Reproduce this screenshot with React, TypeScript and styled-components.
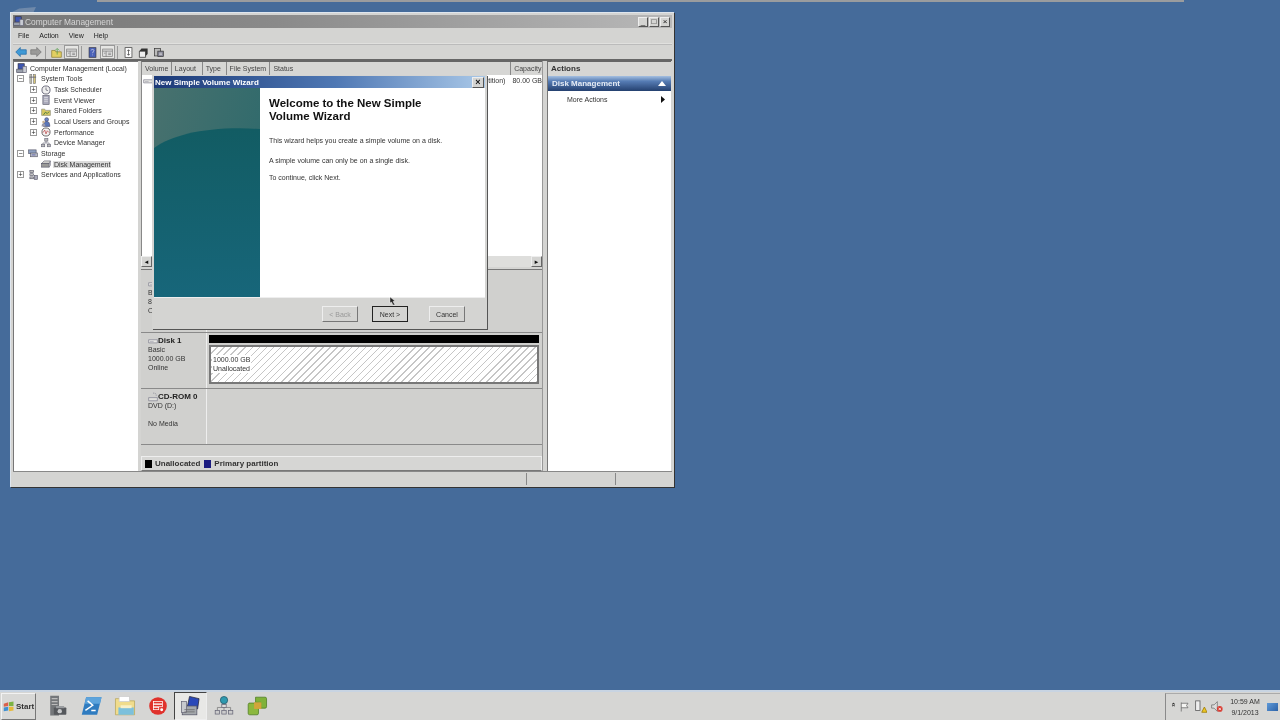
import { type ReactNode } from "react";
import styled, { createGlobalStyle } from "styled-components";

const GlobalStyle = createGlobalStyle`
  html, body {
    margin: 0;
    padding: 0;
    width: 1280px;
    height: 720px;
    overflow: hidden;
    background: #456b9a;
    font-family: "Liberation Sans", Arial, sans-serif;
    font-size: 7px;
    color: #222;
  }
  * { box-sizing: border-box; }
`;

const icons: Record<string, ReactNode> = {
  computer: (
    <>
      <rect x="3" y="1" width="9" height="8" fill="#3d55b0" stroke="#334" />
      <rect x="1" y="9" width="11" height="5" fill="#9aa0ac" stroke="#556" />
      <rect x="10" y="5" width="5" height="9" fill="#c9ccd4" stroke="#667" />
    </>
  ),
  tools: (
    <>
      <rect x="3" y="1" width="3" height="14" fill="#c8c8b8" stroke="#777" />
      <rect x="9" y="1" width="3" height="14" fill="#d8c878" stroke="#777" />
      <path d="M2 5h11" stroke="#667" strokeWidth="1.5" />
    </>
  ),
  clock: (
    <>
      <circle cx="8" cy="8" r="6.5" fill="#eee" stroke="#667" strokeWidth="1.5" />
      <path d="M8 4v4l3 1" stroke="#445" fill="none" />
    </>
  ),
  log: (
    <>
      <rect x="3" y="1" width="10" height="14" fill="#aab" stroke="#556" />
      <path d="M5 4h6M5 7h6M5 10h6" stroke="#eee" />
    </>
  ),
  share: (
    <>
      <path d="M1 5h5l1 2h8v8H1z" fill="#d8c860" stroke="#887" />
      <path d="M4 14l3-4 3 2 3-3" stroke="#4a7a40" fill="none" strokeWidth="1.5" />
    </>
  ),
  users: (
    <>
      <circle cx="9" cy="4" r="3" fill="#6a86c8" stroke="#446" />
      <path d="M4 15c0-6 2-8 5-8s5 2 5 8z" fill="#5a76b8" stroke="#446" />
      <circle cx="4" cy="8" r="2" fill="#c8b090" />
      <path d="M1 15c0-3 1-5 3-5s3 2 3 5z" fill="#99a" />
    </>
  ),
  perf: (
    <>
      <circle cx="8" cy="8" r="6.5" fill="#f4f0f0" stroke="#666" strokeWidth="1.5" />
      <path d="M3 9l3-4 2 6 2-5 3 3" stroke="#b03030" fill="none" />
    </>
  ),
  device: (
    <>
      <rect x="6" y="1" width="5" height="4" fill="#bbb" stroke="#667" />
      <rect x="1" y="10" width="5" height="4" fill="#bbb" stroke="#667" />
      <rect x="10" y="10" width="5" height="4" fill="#bbb" stroke="#667" />
      <path d="M8 5v3M3 10V8h10v2" stroke="#667" fill="none" />
    </>
  ),
  storage: (
    <>
      <rect x="1" y="3" width="12" height="6" fill="#8ea0c0" stroke="#556" />
      <rect x="4" y="8" width="11" height="6" fill="#b8bcc4" stroke="#556" />
      <path d="M6 11h6" stroke="#44a" />
    </>
  ),
  disk: (
    <>
      <path d="M1 7l4-4h10l-2 4z" fill="#d4d4d0" stroke="#667" />
      <rect x="1" y="7" width="12" height="6" fill="#9a9a98" stroke="#556" />
      <path d="M13 13l2-3V3" fill="none" stroke="#667" />
    </>
  ),
  services: (
    <>
      <rect x="3" y="1" width="6" height="3" fill="#bbb" stroke="#556" />
      <rect x="3" y="6" width="6" height="3" fill="#ccc" stroke="#556" />
      <rect x="3" y="11" width="6" height="3" fill="#bbb" stroke="#556" />
      <rect x="10" y="9" width="5" height="6" fill="#aab" stroke="#556" />
    </>
  ),
  back: <path d="M1 8l6-6v3h8v6H7v3z" fill="#3f9ad6" stroke="#2a6ea8" />,
  forward: <path d="M15 8L9 2v3H1v6h8v3z" fill="#9a9a98" stroke="#777" />,
  up: (
    <>
      <path d="M1 5h5l1 2h8v8H1z" fill="#e2cf62" stroke="#8a7a30" />
      <path d="M9 11V3M6 5l3-3 3 3" stroke="#4a9a40" fill="none" />
    </>
  ),
  pane: (
    <>
      <rect x="1" y="3" width="14" height="11" fill="#ddd" stroke="#777" />
      <path d="M1 6h14M6 6v8M3 9h2M9 9h4M9 11h4" stroke="#777" />
    </>
  ),
  help: (
    <>
      <rect x="3" y="1" width="10" height="14" fill="#4a62b8" stroke="#334" />
      <path d="M6 5c0-2 4-2 4 0s-2 2-2 4M8 11v1" stroke="#dde" fill="none" />
    </>
  ),
  exportList: (
    <>
      <rect x="3" y="1" width="10" height="14" fill="#fff" stroke="#333" />
      <path d="M6 6l2-2 2 2M8 4v8M6 10l2 2 2-2" stroke="#333" fill="none" />
    </>
  ),
  props: (
    <>
      <path d="M2 6h9v9H2z" fill="#eee" stroke="#222" />
      <path d="M2 6l3-4h9l-3 4zM11 6l3-4v8l-3 3z" fill="#333" />
    </>
  ),
  snap: (
    <>
      <rect x="2" y="2" width="9" height="11" fill="#bbb" stroke="#333" />
      <rect x="7" y="6" width="8" height="8" fill="#889" stroke="#333" />
      <path d="M9 9h4M9 11h4" stroke="#ddd" />
    </>
  ),
  drive: (
    <>
      <path d="M1 6h14v5H1z" fill="#e8e8e4" stroke="#778" />
      <path d="M3 9h6" stroke="#99a" />
    </>
  ),
  cdrom: (
    <>
      <path d="M1 9h14v5H1z" fill="#e0e0dc" stroke="#778" />
      <path d="M8 2a4 3 0 0 1 5 4" stroke="#778" fill="none" strokeDasharray="2 1" />
    </>
  ),
  orb: (
    <>
      <path d="M1 5l6-2v5l-6 1z" fill="#d9604a" />
      <path d="M8 3l6-1v6l-6 0z" fill="#7cb342" />
      <path d="M1 10l6-1v5l-6 1z" fill="#3f8fd0" />
      <path d="M8 9h6v5l-6 1z" fill="#e6b93a" />
    </>
  ),
  server: (
    <>
      <rect x="3" y="1" width="12" height="27" fill="#74777a" />
      <path d="M5 5h8M5 9h8M5 13h8" stroke="#bbb" strokeWidth="1.5" />
      <rect x="8" y="17" width="17" height="10" rx="1" fill="#55585c" />
      <rect x="11" y="15" width="11" height="3" fill="#9a9da0" />
      <circle cx="16" cy="22" r="3" fill="#c8cacc" />
    </>
  ),
  shell: (
    <>
      <path d="M7 3h21l-6 24H1z" fill="#2f7cc0" />
      <path d="M7 3h21l-2 9H5z" fill="#5da4dc" />
      <path d="M9 8l7 6-10 7M14 21h6" stroke="#fff" strokeWidth="2" fill="none" />
    </>
  ),
  explorer: (
    <>
      <path d="M2 5h11l2 3h13v19H2z" fill="#f0dc8c" stroke="#b8a458" />
      <rect x="7" y="2" width="14" height="7" fill="#fff" stroke="#ccc" />
      <rect x="6" y="17" width="21" height="10" fill="#7cc0dc" />
      <rect x="9" y="14" width="15" height="4" fill="#f8f0c8" />
    </>
  ),
  redCircle: (
    <>
      <circle cx="15" cy="15" r="12" fill="#e0322c" />
      <rect x="9" y="9" width="12" height="3" fill="none" stroke="#fff" />
      <rect x="9" y="13" width="12" height="3" fill="none" stroke="#fff" />
      <rect x="9" y="17" width="7" height="3" fill="none" stroke="#fff" />
      <circle cx="20" cy="20" r="2" fill="#fff" />
    </>
  ),
  management: (
    <>
      <path d="M13 2l13 3-2 14-14-3z" fill="#2a48b8" stroke="#223" />
      <rect x="3" y="15" width="20" height="12" fill="#a4a8ac" stroke="#556" />
      <rect x="2" y="9" width="7" height="15" fill="#c8cace" stroke="#667" />
      <path d="M6 20h14M6 23h14" stroke="#666" />
    </>
  ),
  network: (
    <>
      <circle cx="15" cy="7" r="5" fill="#2f9ab0" stroke="#256" />
      <path d="M15 12v5M6 21v-4h18v4M15 17v4" stroke="#777" fill="none" />
      <rect x="12" y="13" width="6" height="4" fill="#ddd" stroke="#667" />
      <rect x="3" y="21" width="6" height="5" fill="#ccc" stroke="#667" />
      <rect x="12" y="21" width="6" height="5" fill="#ccc" stroke="#667" />
      <rect x="21" y="21" width="6" height="5" fill="#ccc" stroke="#667" />
    </>
  ),
  vmware: (
    <>
      <path d="M13 3h13a2 2 0 0 1 2 2v11a2 2 0 0 1-2 2h-6v-8h-7z" fill="#7fb23a" stroke="#4a7a20" />
      <path d="M4 11h13v14a2 2 0 0 1-2 2H5a2 2 0 0 1-2-2V13z" fill="#8cb83e" stroke="#4a7a20" />
      <rect x="11" y="10" width="10" height="9" fill="#d2a53a" />
    </>
  ),
  flag: <path d="M3 2v12M3 3h9l-2 3 2 3H3" stroke="#666" fill="#f4f4f2" />,
  tower: (
    <>
      <rect x="3" y="1" width="5" height="11" fill="#eee" stroke="#666" />
      <path d="M10 14l3-6 3 6z" fill="#f0c820" stroke="#a08010" />
    </>
  ),
  speaker: (
    <>
      <path d="M2 6h3l4-4v12l-4-4H2z" fill="#ddd" stroke="#777" />
      <circle cx="12" cy="11" r="3.5" fill="#d83a30" />
      <path d="M10.5 9.5l3 3M13.5 9.5l-3 3" stroke="#fff" />
    </>
  ),
};

const Glyph = ({
  name,
  size = 10,
  box = 16,
}: {
  name: string;
  size?: number;
  box?: number;
}) => (
  <svg width={size} height={size} viewBox={`0 0 ${box} ${box}`} style={{ flexShrink: 0 }}>
    {icons[name]}
  </svg>
);

const tree = [
  { label: "Computer Management (Local)", icon: "computer", level: 0 },
  { label: "System Tools", icon: "tools", level: 1, mark: "−" },
  { label: "Task Scheduler", icon: "clock", level: 2, mark: "+" },
  { label: "Event Viewer", icon: "log", level: 2, mark: "+" },
  { label: "Shared Folders", icon: "share", level: 2, mark: "+" },
  { label: "Local Users and Groups", icon: "users", level: 2, mark: "+" },
  { label: "Performance", icon: "perf", level: 2, mark: "+" },
  { label: "Device Manager", icon: "device", level: 2 },
  { label: "Storage", icon: "storage", level: 1, mark: "−" },
  { label: "Disk Management", icon: "disk", level: 2, selected: true },
  { label: "Services and Applications", icon: "services", level: 1, mark: "+" },
];

const columns = [
  { label: "Volume", width: 30 },
  { label: "Layout", width: 31 },
  { label: "Type", width: 24 },
  { label: "File System", width: 44 },
  { label: "Status", width: 242 },
  { label: "Capacity", width: 31 },
];

const taskIcons = ["server", "shell", "explorer", "redCircle", "management", "network", "vmware"];

export default function App() {
  return (
    <Desktop>
      <GlobalStyle />
      <Workspace>
        <BehindWindow />
        <DesktopIconGhost />
        <Window>
          <TitleBar>
            <Glyph name="computer" size={11} />
            <TitleText>Computer Management</TitleText>
            <WindowButtons>
              <CaptionButton>_</CaptionButton>
              <CaptionButton>□</CaptionButton>
              <CaptionButton>×</CaptionButton>
            </WindowButtons>
          </TitleBar>
          <MenuBar>
            <MenuItem>File</MenuItem>
            <MenuItem>Action</MenuItem>
            <MenuItem>View</MenuItem>
            <MenuItem>Help</MenuItem>
          </MenuBar>
          <Toolbar>
            <ToolButton><Glyph name="back" size={12} /></ToolButton>
            <ToolButton><Glyph name="forward" size={12} /></ToolButton>
            <ToolSeparator />
            <ToolButton><Glyph name="up" size={11} /></ToolButton>
            <ToolButton $pressed><Glyph name="pane" size={11} /></ToolButton>
            <ToolSeparator />
            <ToolButton><Glyph name="help" size={11} /></ToolButton>
            <ToolButton $pressed><Glyph name="pane" size={11} /></ToolButton>
            <ToolSeparator />
            <ToolButton><Glyph name="exportList" size={11} /></ToolButton>
            <ToolButton><Glyph name="props" size={11} /></ToolButton>
            <ToolButton><Glyph name="snap" size={11} /></ToolButton>
          </Toolbar>

          <Panes>
            <TreePane>
              {tree.map((item) => (
                <TreeRow key={item.label} $level={item.level}>
                  {item.level > 0 && (
                    <Expander $visible={Boolean(item.mark)}>{item.mark}</Expander>
                  )}
                  <Glyph name={item.icon} size={item.level === 0 ? 11 : 10} />
                  <TreeLabel $selected={item.selected}>{item.label}</TreeLabel>
                </TreeRow>
              ))}
            </TreePane>

            <CenterPane>
              <ColumnHeader>
                {columns.map((col) => (
                  <ColumnCell key={col.label} style={{ width: col.width }}>
                    {col.label}
                  </ColumnCell>
                ))}
              </ColumnHeader>
              <VolumeList>
                <VolumeRow>
                  <Glyph name="drive" size={10} />
                  <VolumeLayout>tition)</VolumeLayout>
                  <VolumeSize>80.00 GB</VolumeSize>
                </VolumeRow>
              </VolumeList>
              <HScroll>
                <ScrollArrow>◄</ScrollArrow>
                <ScrollTrack />
                <ScrollArrow>►</ScrollArrow>
              </HScroll>
              <Splitter />
              <DiskRow $height={63}>
                <DiskLabel $top={9}>
                  <DiskName><Glyph name="drive" size={10} />Disk 0</DiskName>
                  <div>Basic</div>
                  <div>80.00 GB</div>
                  <div>Online</div>
                </DiskLabel>
              </DiskRow>
              <DiskRow $height={56}>
                <DiskLabel>
                  <DiskName><Glyph name="drive" size={10} />Disk 1</DiskName>
                  <div>Basic</div>
                  <div>1000.00 GB</div>
                  <div>Online</div>
                </DiskLabel>
                <DiskVolumes>
                  <VolumeBar />
                  <Unallocated>
                    <UnallocatedText>
                      <div>1000.00 GB</div>
                      <div>Unallocated</div>
                    </UnallocatedText>
                  </Unallocated>
                </DiskVolumes>
              </DiskRow>
              <DiskRow $height={56}>
                <DiskLabel>
                  <DiskName><Glyph name="cdrom" size={10} />CD-ROM 0</DiskName>
                  <div>DVD (D:)</div>
                  <br />
                  <div>No Media</div>
                </DiskLabel>
              </DiskRow>
              <DiskFiller />
              <Legend>
                <Swatch $color="#000" />
                <LegendText>Unallocated</LegendText>
                <Swatch $color="#1c1c80" />
                <LegendText>Primary partition</LegendText>
              </Legend>

              <Wizard>
                <WizardTitle>
                  <span>New Simple Volume Wizard</span>
                  <WizardClose>×</WizardClose>
                </WizardTitle>
                <WizardBody>
                  <WizardBanner>
                    <svg width="106" height="209" viewBox="0 0 106 209">
                      <defs>
                        <linearGradient id="bannerTop" x1="0" y1="0" x2="1" y2="0.5">
                          <stop offset="0" stopColor="#48716e" />
                          <stop offset="1" stopColor="#2f6a6c" />
                        </linearGradient>
                        <linearGradient id="bannerWave" x1="0" y1="0" x2="0" y2="1">
                          <stop offset="0" stopColor="#125c63" />
                          <stop offset="1" stopColor="#17667a" />
                        </linearGradient>
                      </defs>
                      <rect width="106" height="209" fill="url(#bannerTop)" />
                      <path d="M0 60C20 46 55 38 106 41V209H0z" fill="url(#bannerWave)" />
                    </svg>
                  </WizardBanner>
                  <WizardContent>
                    <WizardHeading>
                      Welcome to the New Simple
                      <br />
                      Volume Wizard
                    </WizardHeading>
                    <WizardLine $top={13}>This wizard helps you create a simple volume on a disk.</WizardLine>
                    <WizardLine $top={11}>A simple volume can only be on a single disk.</WizardLine>
                    <WizardLine $top={8}>To continue, click Next.</WizardLine>
                  </WizardContent>
                </WizardBody>
                <WizardFooter>
                  <WizardButton disabled>&lt; Back</WizardButton>
                  <WizardButton $default>Next &gt;</WizardButton>
                  <CancelButton>Cancel</CancelButton>
                </WizardFooter>
                <Cursor width="7" height="9" viewBox="0 0 7 9">
                  <path d="M1 0l5 4-2 .5L6 8H4L2.500 5 1 6z" fill="#222" stroke="#fff" strokeWidth="0.4" />
                </Cursor>
              </Wizard>
            </CenterPane>

            <ActionsPane>
              <ActionsHeader>Actions</ActionsHeader>
              <ActionsBand>
                <span>Disk Management</span>
                <BandArrow width="8" height="5" viewBox="0 0 8 5">
                  <path d="M0 5l4-5 4 5z" fill="#fff" />
                </BandArrow>
              </ActionsBand>
              <ActionItem>
                <span>More Actions</span>
                <svg width="4" height="7" viewBox="0 0 4 7">
                  <path d="M0 0l4 3.500L0 7z" fill="#111" />
                </svg>
              </ActionItem>
            </ActionsPane>
          </Panes>

          <StatusBar>
            <StatusCell $width={514} />
            <StatusCell $width={89} />
            <StatusCell $width={55} />
          </StatusBar>
        </Window>
      </Workspace>

      <Taskbar>
        <StartButton>
          <Glyph name="orb" size={12} />
          <span>Start</span>
        </StartButton>
        <QuickLaunch>
          {taskIcons.map((name) => (
            <TaskButton key={name} $active={name === "management"}>
              <Glyph name={name} size={22} box={30} />
            </TaskButton>
          ))}
        </QuickLaunch>
        <Tray>
          <TrayArrow>«</TrayArrow>
          <Glyph name="flag" size={12} />
          <Glyph name="tower" size={14} />
          <SpeakerSlot>
            <Glyph name="speaker" size={13} />
          </SpeakerSlot>
          <Clock>
            <div>10:59 AM</div>
            <div>9/1/2013</div>
          </Clock>
          <ShowDesktop />
        </Tray>
      </Taskbar>
    </Desktop>
  );
}

const Desktop = styled.div`
  width: 1280px;
  height: 720px;
  display: flex;
  flex-direction: column;
  background: #456b9a;
  filter: blur(0.35px);
`;

const Workspace = styled.div`
  position: relative;
  flex: 1;
`;

const BehindWindow = styled.div`
  position: absolute;
  left: 97px;
  top: 0;
  width: 1087px;
  height: 2px;
  background: #9a9c9e;
`;

const DesktopIconGhost = styled.div`
  position: absolute;
  left: 12px;
  top: 7px;
  width: 24px;
  height: 5px;
  background: #6f89aa;
  clip-path: polygon(0 100%, 30% 30%, 100% 0, 90% 100%);
`;

const Window = styled.div`
  position: absolute;
  left: 10px;
  top: 12px;
  width: 664px;
  height: 475px;
  display: flex;
  flex-direction: column;
  padding: 2px;
  background: #d4d4d2;
  border-top: 1px solid #dfe6ee;
  border-left: 1px solid #dfe6ee;
  box-shadow: 1px 1px 0 #333;
`;

const TitleBar = styled.div`
  height: 13px;
  display: flex;
  align-items: center;
  gap: 1px;
  padding: 0 2px 0 0;
  background: linear-gradient(90deg, #777 0%, #8a8a8a 40%, #b8b8b8 100%);
`;

const TitleText = styled.span`
  color: #d6d6d6;
  font-size: 8.400px;
`;

const WindowButtons = styled.div`
  display: flex;
  gap: 1px;
  margin-left: auto;
`;

const CaptionButton = styled.div`
  width: 10px;
  height: 10px;
  display: flex;
  align-items: center;
  justify-content: center;
  background: #d4d4d2;
  border: 1px solid #eee;
  border-right-color: #555;
  border-bottom-color: #555;
  color: #111;
  font-size: 8px;
  line-height: 1;
`;

const MenuBar = styled.div`
  height: 16px;
  display: flex;
  align-items: center;
  gap: 10px;
  padding-left: 5px;
  border-bottom: 1px solid #e0e0de;
`;

const MenuItem = styled.span`
  font-size: 7px;
  color: #222;
`;

const Toolbar = styled.div`
  height: 17px;
  display: flex;
  align-items: center;
  border-top: 1px solid #bbb;
  border-bottom: 2px solid #666;
`;

const ToolButton = styled.div<{ $pressed?: boolean }>`
  width: 15px;
  height: 14px;
  display: flex;
  align-items: center;
  justify-content: center;
  background: ${({ $pressed }) => ($pressed ? "#e6e6e4" : "transparent")};
  border: 1px solid ${({ $pressed }) => ($pressed ? "#999" : "transparent")};
`;

const ToolSeparator = styled.div`
  width: 1px;
  height: 13px;
  margin: 0 3px 0 2px;
  background: #9a9a9a;
`;

const Panes = styled.div`
  position: relative;
  flex: 1;
  display: flex;
  gap: 3px;
  min-height: 0;
`;

const TreePane = styled.div`
  width: 125px;
  padding: 1px 0 0 2px;
  background: #fff;
  border-left: 1px solid #777;
  border-top: 1px solid #777;
`;

const TreeRow = styled.div<{ $level: number }>`
  height: 10.650px;
  display: flex;
  align-items: center;
  gap: 2px;
  padding-left: ${({ $level }) => ($level === 2 ? 14 : $level === 1 ? 1 : 0)}px;
`;

const Expander = styled.span<{ $visible: boolean }>`
  width: 7px;
  height: 7px;
  margin-right: 2px;
  display: flex;
  align-items: center;
  justify-content: center;
  border: 1px solid ${({ $visible }) => ($visible ? "#999" : "transparent")};
  color: #222;
  font-size: 7px;
  line-height: 1;
  flex-shrink: 0;
`;

const TreeLabel = styled.span<{ $selected?: boolean }>`
  padding: 0 1px;
  background: ${({ $selected }) => ($selected ? "#dcdcdc" : "transparent")};
  color: #333;
  white-space: nowrap;
`;

const CenterPane = styled.div`
  position: relative;
  width: 402px;
  display: flex;
  flex-direction: column;
  background: #d0d0ce;
  border-right: 1px solid #999;
`;

const ColumnHeader = styled.div`
  height: 14px;
  display: flex;
  background: #d6d6d4;
  border-top: 1px solid #666;
  border-left: 1px solid #888;
`;

const ColumnCell = styled.div`
  height: 13px;
  padding-left: 3px;
  line-height: 13px;
  color: #444;
  border-right: 1px solid #888;
  white-space: nowrap;
  overflow: hidden;

  &:last-child {
    border-right: 0;
  }
`;

const VolumeList = styled.div`
  height: 181px;
  background: #fff;
  border-left: 1px solid #888;
`;

const VolumeRow = styled.div`
  height: 11px;
  display: flex;
  align-items: center;
  padding-left: 1px;
`;

const VolumeLayout = styled.span`
  margin-left: auto;
  color: #333;
`;

const VolumeSize = styled.span`
  margin-left: 7px;
  color: #333;
  white-space: nowrap;
`;

const HScroll = styled.div`
  height: 11px;
  display: flex;
  background: #dededc;
`;

const ScrollArrow = styled.div`
  width: 11px;
  height: 11px;
  display: flex;
  align-items: center;
  justify-content: center;
  background: #d4d4d2;
  border: 1px solid #eee;
  border-right-color: #666;
  border-bottom-color: #666;
  color: #111;
  font-size: 6px;
`;

const ScrollTrack = styled.div`
  flex: 1;
`;

const Splitter = styled.div`
  height: 3px;
  background: #d4d4d2;
  border-bottom: 1px solid #777;
`;

const DiskRow = styled.div<{ $height: number }>`
  height: ${({ $height }) => $height}px;
  display: flex;
  border-bottom: 1px solid #8a8a8a;
`;

const DiskLabel = styled.div<{ $top?: number }>`
  width: 66px;
  padding: ${({ $top }) => $top ?? 3}px 0 0 7px;
  border-right: 1px solid #eee;
  color: #333;
  line-height: 9px;
`;

const DiskName = styled.div`
  display: flex;
  align-items: center;
  height: 9px;
  font-size: 8px;
  font-weight: bold;
  color: #222;
`;

const DiskVolumes = styled.div`
  flex: 1;
  display: flex;
  flex-direction: column;
  gap: 2px;
  padding: 2px 3px 4px 2px;
`;

const VolumeBar = styled.div`
  height: 8px;
  background: #000;
`;

const Unallocated = styled.div`
  flex: 1;
  display: flex;
  align-items: flex-end;
  padding: 0 0 9px 1px;
  border: 2px solid #777;
  background: repeating-linear-gradient(135deg, #fff 0 4px, #c6c6c6 4px 5px);
`;

const UnallocatedText = styled.div`
  padding: 0 1px;
  background: #fff;
  color: #333;
  line-height: 9px;
`;

const DiskFiller = styled.div`
  height: 11px;
`;

const Legend = styled.div`
  height: 15px;
  display: flex;
  align-items: center;
  gap: 3px;
  padding-left: 3px;
  background: #d6d6d4;
  border: 1px solid #eee;
  border-bottom-color: #777;
`;

const Swatch = styled.span<{ $color: string }>`
  width: 7px;
  height: 8px;
  background: ${({ $color }) => $color};
`;

const LegendText = styled.span`
  margin-right: 1px;
  font-size: 8px;
  font-weight: bold;
  color: #333;
`;

const Wizard = styled.div`
  position: absolute;
  left: 11px;
  top: 14px;
  width: 335px;
  height: 254px;
  display: flex;
  flex-direction: column;
  padding: 1px 2px 2px 2px;
  background: #d4d4d2;
  box-shadow: 1px 1px 0 #555;
  z-index: 2;
`;

const WizardTitle = styled.div`
  height: 12px;
  display: flex;
  align-items: center;
  justify-content: space-between;
  padding: 0 1px;
  background: linear-gradient(90deg, #1c3a78 0%, #4f78b4 55%, #a9c8e8 100%);
  color: #fff;
  font-size: 8px;
  font-weight: bold;
`;

const WizardClose = styled.span`
  width: 12px;
  height: 11px;
  display: flex;
  align-items: center;
  justify-content: center;
  background: #d4d4d2;
  border: 1px solid #eee;
  border-right-color: #555;
  border-bottom-color: #555;
  color: #111;
  font-size: 9px;
  line-height: 1;
`;

const WizardBody = styled.div`
  height: 209px;
  display: flex;
  background: #fff;
`;

const WizardBanner = styled.div`
  width: 106px;
  height: 209px;
  line-height: 0;
`;

const WizardContent = styled.div`
  flex: 1;
  padding: 9px 0 0 9px;
`;

const WizardHeading = styled.h1`
  margin: 0;
  font-size: 11.500px;
  line-height: 13px;
  font-weight: bold;
  color: #111;
`;

const WizardLine = styled.p<{ $top: number }>`
  margin: ${({ $top }) => $top}px 0 0;
  line-height: 9px;
  color: #333;
`;

const WizardFooter = styled.div`
  flex: 1;
  display: flex;
  align-items: flex-start;
  justify-content: flex-end;
  gap: 14px;
  padding: 8px 20px 0 0;
  border-top: 1px solid #eee;
`;

const WizardButton = styled.button<{ $default?: boolean }>`
  width: 36px;
  height: 16px;
  padding: 0;
  background: #d4d4d2;
  border: 1px solid ${({ $default }) => ($default ? "#222" : "#eee")};
  border-right-color: ${({ $default }) => ($default ? "#222" : "#777")};
  border-bottom-color: ${({ $default }) => ($default ? "#222" : "#777")};
  color: #333;
  font: 7px "Liberation Sans", Arial, sans-serif;

  &:disabled {
    color: #999;
  }
`;

const CancelButton = styled(WizardButton)`
  margin-left: 7px;
`;

const Cursor = styled.svg`
  position: absolute;
  left: 237px;
  top: 222px;
`;

const ActionsPane = styled.div`
  width: 124px;
  margin-left: 1px;
  background: #fff;
  border-left: 1px solid #777;
  border-top: 1px solid #666;
`;

const ActionsHeader = styled.div`
  height: 14px;
  padding-left: 3px;
  line-height: 13px;
  background: #d6d6d4;
  font-size: 8px;
  font-weight: bold;
  color: #333;
`;

const ActionsBand = styled.div`
  height: 15px;
  display: flex;
  align-items: center;
  justify-content: space-between;
  padding: 0 5px 0 4px;
  background: linear-gradient(180deg, #a4bfe0 0%, #567cb4 35%, #24406f 100%);
  color: #e6edf6;
  font-size: 8px;
  font-weight: bold;
`;

const BandArrow = styled.svg`
  display: block;
`;

const ActionItem = styled.div`
  height: 16px;
  display: flex;
  align-items: center;
  justify-content: space-between;
  padding: 0 6px 0 19px;
  color: #333;
`;

const StatusBar = styled.div`
  height: 14px;
  display: flex;
  padding-top: 1px;
  border-top: 1px solid #888;
`;

const StatusCell = styled.div<{ $width: number }>`
  width: ${({ $width }) => $width}px;
  border-right: 1px solid #888;

  &:last-child {
    border-right: 0;
  }
`;

const Taskbar = styled.div`
  height: 30px;
  display: flex;
  align-items: center;
  background: #d6d6d4;
  border-top: 2px solid #c8d4e2;
`;

const StartButton = styled.div`
  width: 35px;
  height: 27px;
  margin-left: 1px;
  display: flex;
  align-items: center;
  gap: 1px;
  padding-left: 1px;
  background: #d8d8d6;
  border: 1px solid #f2f2f2;
  border-right-color: #777;
  border-bottom-color: #777;
  font-size: 8px;
  font-weight: bold;
  color: #333;
`;

const QuickLaunch = styled.div`
  display: flex;
  margin-left: 6px;
`;

const TaskButton = styled.div<{ $active?: boolean }>`
  width: 33px;
  height: 28px;
  display: flex;
  align-items: center;
  justify-content: center;
  background: ${({ $active }) => ($active ? "#e8e8e6" : "transparent")};
  border: 1px solid ${({ $active }) => ($active ? "#eee" : "transparent")};
  border-top-color: ${({ $active }) => ($active ? "#444" : "transparent")};
  border-left-color: ${({ $active }) => ($active ? "#444" : "transparent")};
`;

const Tray = styled.div`
  margin-left: auto;
  height: 27px;
  width: 115px;
  display: flex;
  align-items: center;
  gap: 2px;
  padding-left: 3px;
  border-left: 1px solid #8a8a8a;
  border-top: 1px solid #aaa;
`;

const TrayArrow = styled.span`
  width: 8px;
  font-size: 8px;
  font-weight: bold;
  transform: rotate(90deg);
`;

const SpeakerSlot = styled.span`
  display: flex;
  margin-left: 1px;
`;

const Clock = styled.div`
  width: 40px;
  text-align: center;
  line-height: 11px;
  color: #333;
`;

const ShowDesktop = styled.div`
  width: 11px;
  height: 8px;
  background: linear-gradient(135deg, #5f9ad8, #2c62a8);
`;
